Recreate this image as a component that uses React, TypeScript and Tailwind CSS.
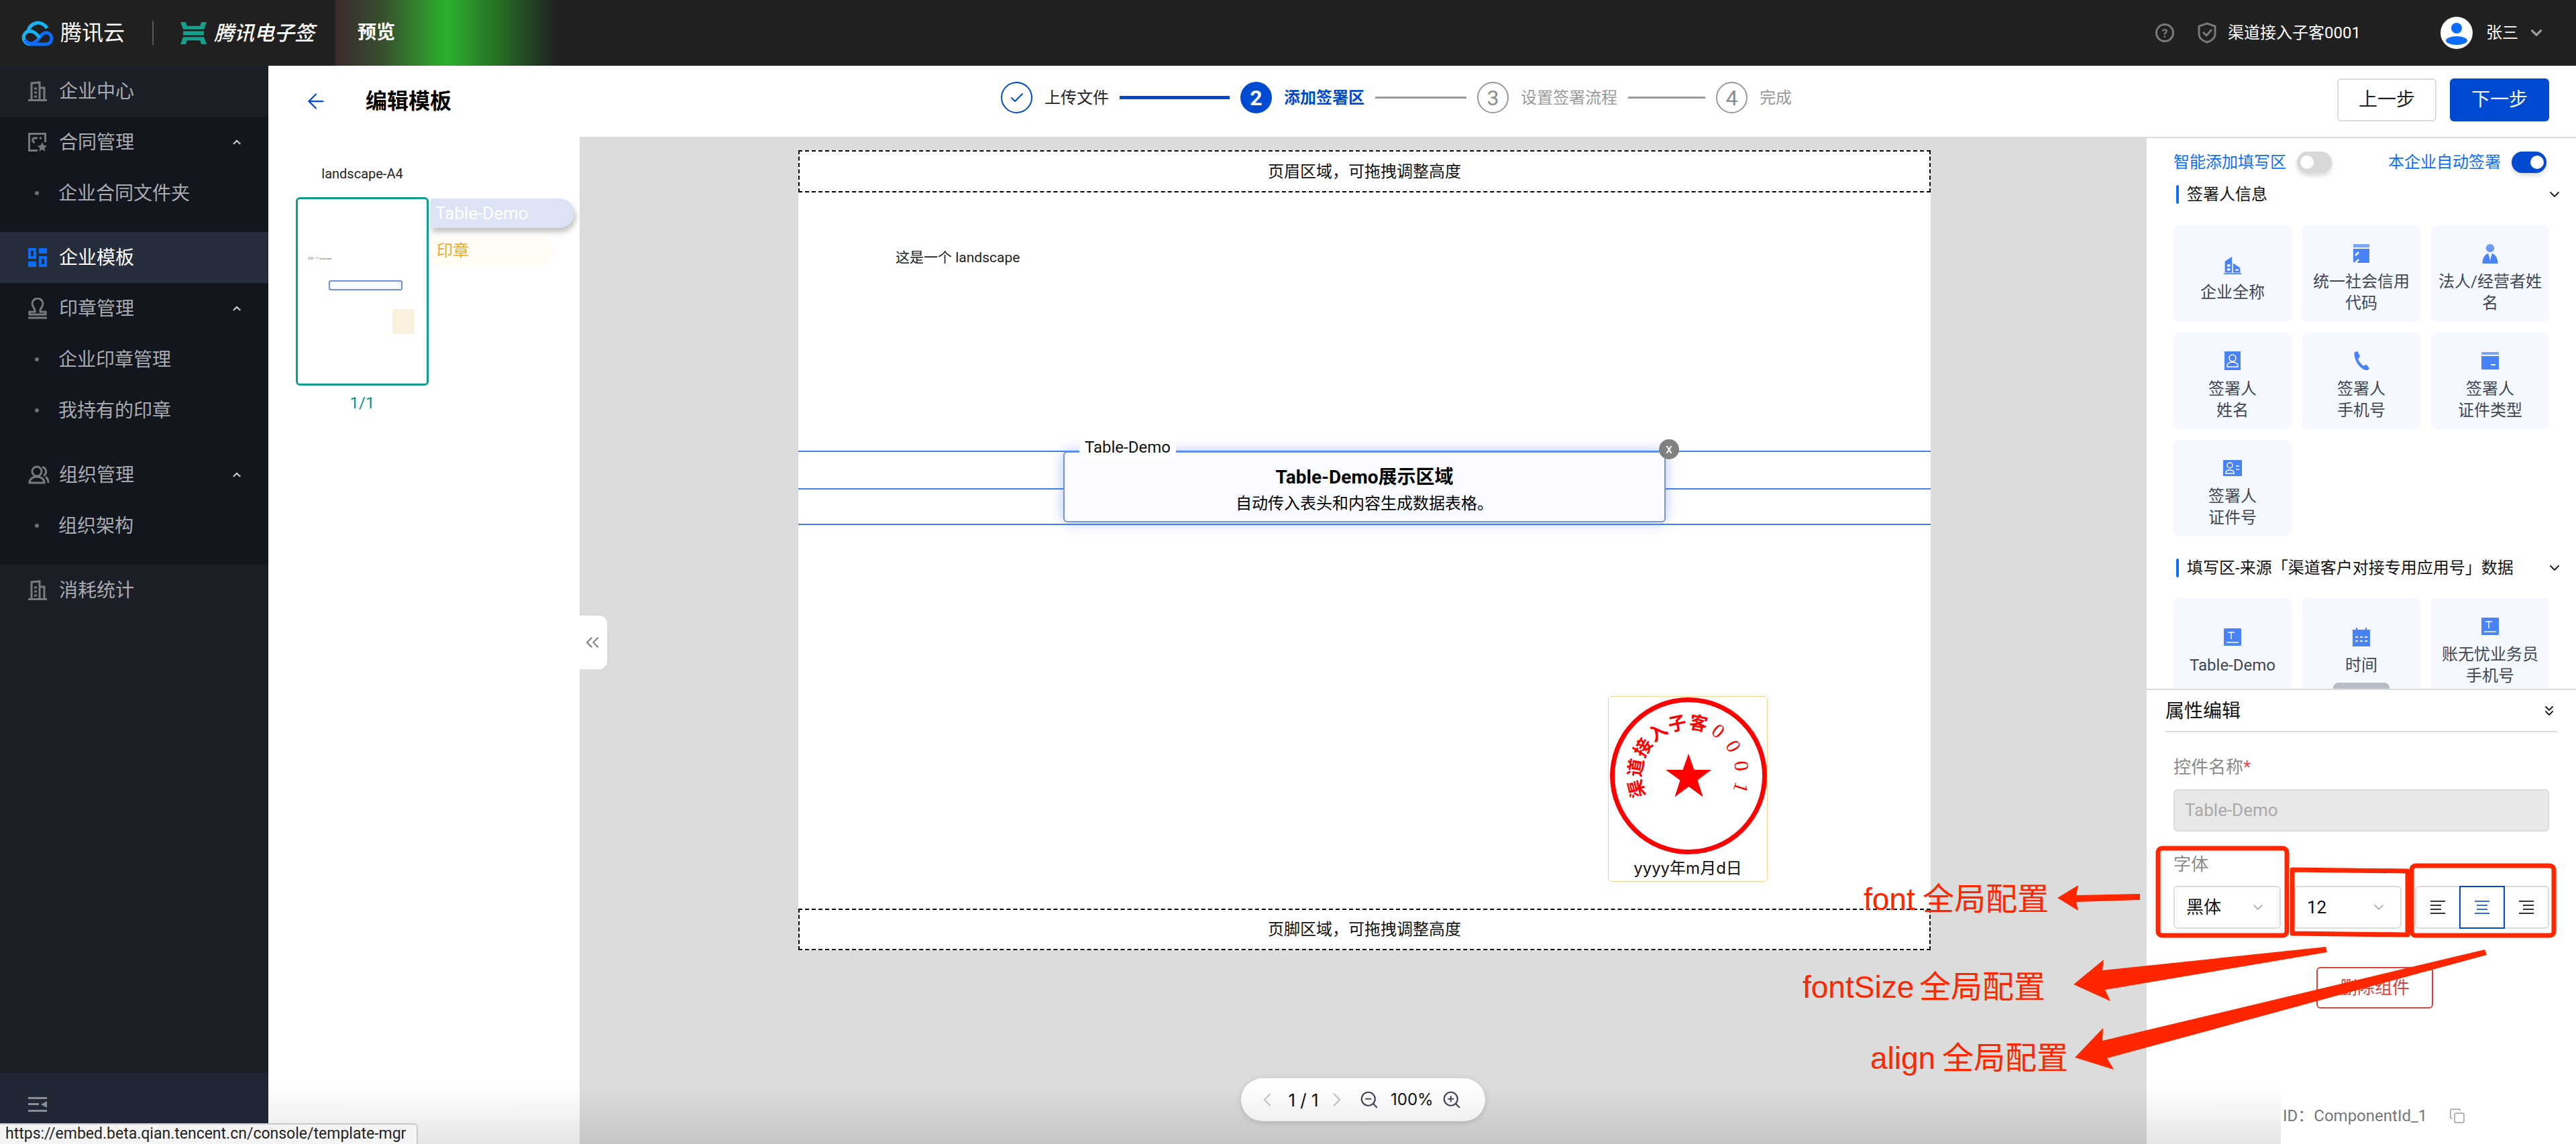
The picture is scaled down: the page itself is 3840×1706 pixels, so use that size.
import type { ReactNode } from "react"
import { ArrowLeft, ChevronDown, ChevronLeft, ChevronRight, ChevronUp, ChevronsDown, ChevronsLeft, Copy, Check, ZoomIn, ZoomOut } from "lucide-react"

const Building = ({ className = "" }: { className?: string }) => (
  <svg viewBox="0 0 28 30" className={className} fill="none" stroke="currentColor" strokeWidth="3">
    <path d="M5 28V3l12-1v26M17 10h7v18M0 28.5h28M9 11h4M9 17h4M9 23h4" />
  </svg>
)

const Contract = () => (
  <svg viewBox="0 0 28 28" className="w-7 h-7 text-[#767a80]" fill="none" stroke="currentColor" strokeWidth="3">
    <path d="M14 26.5H1.5v-25h24V14M7 8h7M7 8v6M7 14h3M17 8h3" />
    <path d="M21 14l2.2 4.8 5 .5-3.8 3.4 1.1 5-4.5-2.7-4.5 2.7 1.1-5-3.8-3.4 5-.5z" fill="currentColor" stroke="none" />
  </svg>
)

const Template = () => (
  <svg viewBox="0 0 28 28" className="w-7 h-7">
    <path fillRule="evenodd" d="M0 0h12v16H0zM4 4v8h4V4z" fill="#0d6dfb" />
    <path d="M16 0h12v8H16zM0 20h12v8H0z" fill="#0d6dfb" />
    <path fillRule="evenodd" d="M16 12h12v16H16zM20 16v8h4v-8z" fill="#0d6dfb" />
  </svg>
)

const Seal = () => (
  <svg viewBox="0 0 28 32" className="w-7 h-8 text-[#767a80]" fill="none" stroke="currentColor" strokeWidth="3">
    <path d="M10 19c0-4-4-5-4-10a8 8 0 0 1 16 0c0 5-4 6-4 10v2h8v4H2v-4h8z" />
    <path d="M0 30h28" />
  </svg>
)

const Team = () => (
  <svg viewBox="0 0 32 28" className="w-8 h-7 text-[#767a80]" fill="none" stroke="currentColor" strokeWidth="3">
    <circle cx="13" cy="9" r="7" />
    <path d="M2 26c0-5 4-9 11-9s11 4 11 9zM21 2.5a7 7 0 0 1 2 13M26 17c2.500 2 4 5 4 9" />
  </svg>
)

const SideRow = ({ icon, label, active, arrow }: { icon: ReactNode; label: string; active?: boolean; arrow?: boolean }) => (
  <div className={`h-[76px] flex items-center pl-[42px] pr-[38px] text-[28px] ${active ? "bg-[#262e3e] text-white" : "text-[#a8abaf]"}`}>
    <div className="w-[46px] flex items-center">{icon}</div>
    <span className="pt-[2px]">{label}</span>
    {arrow && <ChevronUp className="ml-auto w-[18px] h-[18px] text-[#c4c6c9]" strokeWidth={3} />}
  </div>
)

const SubRow = ({ label }: { label: string }) => (
  <div className="h-[76px] flex items-center text-[28px] text-[#a8abaf] pl-[52px]">
    <div className="w-[6px] h-[6px] rounded-full bg-[#6d7075] mr-[29px]" />
    <span className="pt-[2px]">{label}</span>
  </div>
)

const Sidebar = () => (
  <aside className="w-[400px] shrink-0 bg-[#1c1f28] flex flex-col">
    <SideRow icon={<Building className="w-7 h-[30px] text-[#767a80]" />} label="企业中心" />
    <div className="bg-[#13161f] pb-5">
      <SideRow icon={<Contract />} label="合同管理" arrow />
      <SubRow label="企业合同文件夹" />
    </div>
    <SideRow icon={<Template />} label="企业模板" active />
    <div className="bg-[#13161f] pb-5">
      <SideRow icon={<Seal />} label="印章管理" arrow />
      <SubRow label="企业印章管理" />
      <SubRow label="我持有的印章" />
      <div className="h-5" />
      <SideRow icon={<Team />} label="组织管理" arrow />
      <SubRow label="组织架构" />
    </div>
    <SideRow icon={<Building className="w-7 h-[30px] text-[#767a80]" />} label="消耗统计" />
    <div className="mt-auto h-[106px] bg-[#202836] pl-[42px] pt-[36px]">
      <svg viewBox="0 0 28 22" className="w-7 h-[22px] text-[#8a8d92]" fill="currentColor">
        <path d="M0 0h28v3H0zM0 9h16v3H0zM0 19h28v3H0zM28 6v10l-9-5z" />
      </svg>
    </div>
  </aside>
)

const TopBar = () => (
  <header className="h-[98px] bg-[#202020] relative flex items-center text-white shrink-0">
    <div className="absolute left-[500px] top-0 w-[330px] h-full bg-[linear-gradient(90deg,#3a2a2c_0%,#38502e_22%,#2cb02c_50%,#256b25_75%,#202020_100%)]" />
    <svg viewBox="0 0 50 40" className="ml-[32px] w-[50px] h-10 relative" fill="none" strokeWidth="5">
      <path d="M13 37a10 10 0 0 1-3-19.500A15 15 0 0 1 38 13" stroke="#16b4f2" />
      <path d="M5 30c6 10 15 6 21-2s10-10 15-7c6 4 5 16-5 16H13" stroke="#0d6dfb" />
      <path d="M10 18c7-2 12 3 17 9" stroke="#16b4f2" />
    </svg>
    <span className="ml-[8px] text-[32px] relative">腾讯云</span>
    <div className="ml-[41px] w-[2px] h-9 bg-[#55575a] relative" />
    <svg viewBox="0 0 40 34" className="ml-[40px] w-[39px] h-[33px] relative" fill="#13a08f">
      <path d="M0 0h8l2 6h20l2-6h8l-4 11H4zM4 14h32v6H4zM4 23h32l4 11h-8l-2-6H10l-2 6H0z" />
    </svg>
    <span className="ml-[11px] text-[30px] italic font-medium relative">腾讯电子签</span>
    <span className="ml-[64px] text-[28px] font-bold relative">预览</span>
    <div className="ml-auto flex items-center relative">
      <div className="w-7 h-7 rounded-full border-[3px] border-[#77797c] text-[#77797c] text-[18px] font-bold flex items-center justify-center">?</div>
      <svg viewBox="0 0 28 32" className="ml-[35px] w-7 h-8 text-[#77797c]" fill="none" stroke="currentColor" strokeWidth="3">
        <path d="M14 2l12 4v12c0 6-6 10-12 12C8 28 2 24 2 18V6z" />
        <path d="M8 15l5 5 8-9" />
      </svg>
      <span className="ml-[17px] text-[24px] w-[194px] whitespace-nowrap">渠道接入子客0001</span>
      <div className="ml-[123px] w-12 h-12 rounded-full bg-white relative overflow-hidden">
        <div className="absolute left-[16px] top-[9px] w-4 h-4 rounded-full bg-[#0d6dfb]" />
        <div className="absolute left-[8px] top-[29px] w-8 h-[13px] rounded-[50%] bg-[#0d6dfb]" />
      </div>
      <span className="ml-[20px] text-[24px]">张三</span>
      <ChevronDown className="ml-[14px] mr-[46px] w-[26px] h-[26px] text-[#9a9a9a]" strokeWidth={3} />
    </div>
  </header>
)

const Step = ({ n, label, state, line }: { n: string; label: string; state: "done" | "active" | "todo"; line?: number }) => (
  <div className="flex items-center">
    {state === "done" && (
      <div className="w-[47px] h-[47px] rounded-full border-2 border-[#0049d1] flex items-center justify-center text-[#0049d1]">
        <Check className="w-6 h-6" strokeWidth={2} />
      </div>
    )}
    {state === "active" && <div className="w-[47px] h-[47px] rounded-full bg-[#0049d1] flex items-center justify-center text-white text-[32px] font-bold">{n}</div>}
    {state === "todo" && <div className="w-[47px] h-[47px] rounded-full border-2 border-[#999] flex items-center justify-center text-[#8b8b8b] text-[32px]">{n}</div>}
    <span className={`ml-[18px] text-[24px] ${state === "done" ? "text-[#222]" : state === "active" ? "text-[#0049d1] font-bold" : "text-[#999]"}`}>{label}</span>
    {line && (
      <div
        className={`mx-[16px] ${state === "done" ? "h-[5px] bg-[#0049d1]" : "h-[3px] bg-[#999]"}`}
        style={{ width: line }}
      />
    )}
  </div>
)

const HeaderRow = () => (
  <div className="h-[106px] shrink-0 bg-white flex items-center relative">
    <ArrowLeft className="ml-[53px] w-9 h-9 text-[#0049d1]" strokeWidth={1.5} />
    <span className="ml-[56px] text-[32px] font-bold text-black">编辑模板</span>
    <div className="absolute left-[1092px] top-[24px] flex items-center">
      <Step n="1" label="上传文件" state="done" line={164} />
      <Step n="2" label="添加签署区" state="active" line={136} />
      <Step n="3" label="设置签署流程" state="todo" line={115} />
      <Step n="4" label="完成" state="todo" />
    </div>
    <div className="ml-auto flex gap-5 pr-10 -mt-1">
      <button className="w-[148px] h-16 rounded-md border-2 border-[#dcdcdc] bg-white text-[28px] text-[#222]">上一步</button>
      <button className="w-[148px] h-16 rounded-md bg-[#0049d1] text-[28px] text-white">下一步</button>
    </div>
  </div>
)

const ThumbPanel = () => (
  <div className="w-[464px] shrink-0 bg-white relative">
    <div className="absolute left-[41px] top-[40px] w-[198px] text-center text-[20px] text-[#222]">landscape-A4</div>
    <div className="absolute left-[41px] top-[90px] w-[198px] h-[281px] border-[3px] border-[#0f9d8f] rounded-md bg-white">
      <div className="absolute left-[15px] top-[86px] text-[4px] text-[#666]">这是一个 landscape</div>
      <div className="absolute left-[46px] top-[121px] w-[110px] h-[15px] border-2 border-[#6d8ee0] rounded-[3px] bg-[#f8fbff]" />
      <div className="absolute left-[141px] top-[164px] w-[33px] h-[37px] rounded-[2px] bg-[#faf0dd]" />
    </div>
    <div className="absolute left-[41px] top-[379px] w-[198px] text-center text-[24px] text-[#0f8f86]">1/1</div>
    <div className="absolute left-[242px] top-[92px] w-[214px] h-[44px] rounded-r-[22px] bg-[#dbe3f5] shadow-[2px_6px_8px_rgba(0,0,0,0.25)] pl-[7px] text-[26px] leading-[44px] text-white">Table-Demo</div>
    <div className="absolute left-[242px] top-[148px] w-[183px] h-[44px] rounded-r-[22px] bg-[#fffcf3] pl-[9px] text-[24px] leading-[44px] text-[#eda72c]">印章</div>
  </div>
)

const Stamp = () => (
  <div className="absolute left-[1207px] top-[751px] w-[238px] h-[277px] border border-[#f2d48c] rounded-md bg-white">
    <svg viewBox="0 0 238 236" className="w-[238px] h-[236px]">
      <defs>
        <path id="stampArc" d="M55.600 147.600 A70 70 0 1 1 182.400 147.600" />
      </defs>
      <circle cx="119" cy="118" r="113.500" fill="none" stroke="#ff0000" strokeWidth="7" />
      <text fontWeight="700" fill="#ff0000" fontFamily="'Liberation Serif','Noto Sans CJK SC',serif">
        <textPath href="#stampArc">
          <tspan fontSize="27" letterSpacing="1">渠道接入子客</tspan>
          <tspan fontSize="30" fontWeight="400" letterSpacing="13" dx="5">0001</tspan>
        </textPath>
      </text>
      <path d="M119 85l8.500 24h25.500l-20.500 15.500 8 25-21-15.500-21 15.500 8-25L85 109h25.500z" fill="#ff0000" />
    </svg>
    <div className="text-center text-[24px] leading-[34px] text-[#111] mt-[3px] font-['Inter','Noto_Sans_CJK_SC',sans-serif]">yyyy年m月d日</div>
  </div>
)

const TableField = () => (
  <>
    <div className="absolute left-0 right-0 top-[385px] h-[2px] bg-[#3d82ee]" />
    <div className="absolute left-0 right-0 top-[441px] h-[2px] bg-[#3d82ee]" />
    <div className="absolute left-0 right-0 top-[494px] h-[2px] bg-[#3d82ee]" />
    <div className="absolute left-[395px] top-[386px] w-[898px] h-[106px] rounded-md border-2 border-[#7593dd] bg-[#fafbff] shadow-[0_0_20px_rgba(70,110,220,0.4)] flex flex-col items-center text-black">
      <div className="absolute left-[22px] -top-[26px] px-[8px] bg-white text-[24px] leading-[36px] text-[#111]">Table-Demo</div>
      <div className="absolute -right-[22px] -top-[20px] w-[30px] h-[30px] rounded-full bg-[#808080] text-white text-[20px] leading-[28px] text-center">x</div>
      <div className="mt-[19px] text-[28px] leading-[36px] font-bold">Table-Demo展示区域</div>
      <div className="mt-[4px] text-[24px] leading-[34px]">自动传入表头和内容生成数据表格。</div>
    </div>
  </>
)

const Canvas = () => (
  <div className="flex-1 bg-[#dcdcdc] relative">
    <div className="ml-[326px] mt-[20px] w-[1688px] h-[1193px] bg-white flex flex-col">
      <div className="h-[63px] shrink-0 border-2 border-dashed border-black flex items-center justify-center text-[24px] text-[#111]">页眉区域，可拖拽调整高度</div>
      <div className="flex-1 relative">
        <div className="absolute left-[145px] top-[80px] text-[21px] leading-[34px] text-[#222]">这是一个 landscape</div>
        <TableField />
        <Stamp />
      </div>
      <div className="h-[62px] shrink-0 border-2 border-dashed border-black flex items-center justify-center text-[24px] text-[#111]">页脚区域，可拖拽调整高度</div>
    </div>
    <div className="absolute -left-[4px] top-[714px] w-[45px] h-[80px] rounded-r-xl bg-white flex items-center justify-center text-[#8a8a8a]">
      <ChevronsLeft className="w-8 h-8" strokeWidth={1.75} />
    </div>
    <div className="absolute left-[986px] top-[1404px] w-[364px] h-16 rounded-[32px] bg-white shadow-[0_2px_10px_rgba(0,0,0,0.15)] flex items-center text-[26px] text-[#111] whitespace-nowrap font-['Inter','Noto_Sans_CJK_SC',sans-serif]">
      <ChevronLeft className="ml-[22px] w-[34px] h-[34px] text-[#c4c4c4]" strokeWidth={1.5} />
      <span className="ml-[10px] w-[54px] text-center">1 / 1</span>
      <ChevronRight className="ml-[6px] w-[34px] h-[34px] text-[#c4c4c4]" strokeWidth={1.5} />
      <ZoomOut className="ml-[16px] w-[30px] h-[30px] text-[#454a5a]" strokeWidth={1.75} />
      <span className="ml-[17px] text-[24px]">100%</span>
      <ZoomIn className="ml-[12px] w-[30px] h-[30px] text-[#454a5a]" strokeWidth={1.75} />
    </div>
  </div>
)

const iconBlue = "#4a82f7"

const CardIcon = ({ kind }: { kind: string }) => {
  if (kind === "company")
    return (
      <svg viewBox="0 0 30 32" className="w-[30px] h-7 mt-[2px]" fill={iconBlue}>
        <path fillRule="evenodd" d="M2 10l12-8v27H2zM6 15v4h5v-4zM6 22v4h5v-4z" />
        <path fillRule="evenodd" d="M16 13l12 8v8H16zM20 23v3h5v-3z" />
        <path d="M0 30h30v2H0z" />
      </svg>
    )
  if (kind === "credit")
    return (
      <svg viewBox="0 0 24 28" className="w-6 h-7" fill={iconBlue}>
        <path d="M0 0h24v5H0z" opacity="0.7" />
        <path fillRule="evenodd" d="M0 7h24v21H5l4-4-2-2-5 5H0zM2 16l2 2 5-5-2-2z" />
      </svg>
    )
  if (kind === "legal")
    return (
      <svg viewBox="0 0 26 34" className="w-6 h-[30px]" fill={iconBlue}>
        <circle cx="13" cy="8" r="7" opacity="0.8" />
        <path d="M0 34c0-10 5-16 10-17l3 12 3-12c5 1 10 7 10 17z" />
      </svg>
    )
  if (kind === "name")
    return (
      <svg viewBox="0 0 24 28" className="w-6 h-7">
        <rect width="24" height="28" fill={iconBlue} />
        <circle cx="12" cy="10" r="5" fill="none" stroke="#fff" strokeWidth="1.500" />
        <path d="M4 23v-2c0-3 4-5 8-5s8 2 8 5v2z" fill="none" stroke="#fff" strokeWidth="1.500" />
      </svg>
    )
  if (kind === "phone")
    return (
      <svg viewBox="0 0 26 30" className="w-[26px] h-7" fill={iconBlue}>
        <path d="M2 1l5-1 4 8-3 4c1 4 5 9 9 11l4-2 5 6-3 3C14 32 0 15 2 1z" />
      </svg>
    )
  if (kind === "idtype")
    return (
      <svg viewBox="0 0 26 26" className="w-[26px] h-[26px]" fill={iconBlue}>
        <path d="M1 0h24a1 1 0 0 1 1 1v3H0V1a1 1 0 0 1 1-1z" opacity="0.7" />
        <path fillRule="evenodd" d="M0 6h26v19a1 1 0 0 1-1 1H1a1 1 0 0 1-1-1zM14 18v2h7v-2z" />
      </svg>
    )
  if (kind === "idnum")
    return (
      <svg viewBox="0 0 28 24" className="w-7 h-6">
        <rect width="28" height="24" rx="1" fill={iconBlue} />
        <circle cx="10" cy="8" r="4" fill="none" stroke="#fff" strokeWidth="1.500" />
        <path d="M4 20v-1c0-3 3-4 6-4s6 1 6 4v1zM19 9h5M19 14h5" fill="none" stroke="#fff" strokeWidth="1.500" />
      </svg>
    )
  if (kind === "date")
    return (
      <svg viewBox="0 0 26 28" className="w-[26px] h-7" fill={iconBlue}>
        <path fillRule="evenodd" d="M0 3h5V0h2v3h12V0h2v3h5v25H0zM4 13v2h4v-2zM11 13v2h4v-2zM18 13v2h4v-2zM4 19v2h4v-2zM11 19v2h4v-2zM18 19v2h4v-2z" />
      </svg>
    )
  return (
    <svg viewBox="0 0 26 26" className="w-[26px] h-[26px]">
      <rect width="26" height="26" rx="1.500" fill={iconBlue} />
      <path d="M6 6h10M11 6v10M4 21h18" stroke="#fff" strokeWidth="1.500" fill="none" />
    </svg>
  )
}

const Card = ({ kind, lines }: { kind: string; lines: string[] }) => (
  <div className="w-[176px] h-[144px] rounded-lg bg-[#f5f8ff] flex flex-col items-center justify-center pt-4 text-[24px] leading-8 text-[#3f4754] text-center">
    <div className="h-7 flex items-center justify-center">
      <CardIcon kind={kind} />
    </div>
    <div className="mt-3">
      {lines.map((l) => (
        <div key={l}>{l}</div>
      ))}
    </div>
  </div>
)

const Toggle = ({ on }: { on?: boolean }) => (
  <div className={`relative w-[52px] h-8 rounded-full shadow-[0_4px_6px_rgba(0,0,0,0.15)] ${on ? "bg-[#0049d1]" : "bg-[#d8d8d8]"}`}>
    <div className={`absolute top-[6px] w-5 h-5 rounded-full bg-white ${on ? "right-[4px]" : "left-[5px]"}`} />
  </div>
)

const SectionTitle = ({ text }: { text: string }) => (
  <div className="h-7 flex items-center text-[24px] text-[#111] pl-[44px] pr-[20px]">
    <div className="w-1 h-7 rounded-sm bg-[#0d6dfb]" />
    <span className="ml-3">{text}</span>
    <ChevronDown className="ml-auto w-6 h-6 text-[#222]" strokeWidth={2} />
  </div>
)

const FieldPanel = () => (
  <div className="flex-1 overflow-hidden relative pt-5">
    <div className="flex items-center pl-[40px] text-[24px] text-[#0d6dfb] h-8 whitespace-nowrap">
      <span className="w-[168px]">智能添加填写区</span>
      <div className="ml-[16px]"><Toggle /></div>
      <span className="ml-[84px] w-[168px]">本企业自动签署</span>
      <div className="ml-[16px]"><Toggle on /></div>
    </div>
    <div className="mt-[18px]"><SectionTitle text="签署人信息" /></div>
    <div className="mt-8 ml-10 grid grid-cols-[176px_176px_176px] gap-4">
      <Card kind="company" lines={["企业全称"]} />
      <Card kind="credit" lines={["统一社会信用", "代码"]} />
      <Card kind="legal" lines={["法人/经营者姓", "名"]} />
      <Card kind="name" lines={["签署人", "姓名"]} />
      <Card kind="phone" lines={["签署人", "手机号"]} />
      <Card kind="idtype" lines={["签署人", "证件类型"]} />
      <Card kind="idnum" lines={["签署人", "证件号"]} />
    </div>
    <div className="mt-[33px]"><SectionTitle text="填写区-来源「渠道客户对接专用应用号」数据" /></div>
    <div className="mt-[31px] ml-10 grid grid-cols-[176px_176px_176px] gap-4">
      <Card kind="text" lines={["Table-Demo"]} />
      <Card kind="date" lines={["时间"]} />
      <Card kind="text" lines={["账无忧业务员", "手机号"]} />
    </div>
    <div className="absolute left-[278px] bottom-0 w-[84px] h-[9px] rounded-t-lg bg-[#b9bdc7]" />
  </div>
)

const AlignIcon = ({ side, color }: { side: "left" | "center" | "right"; color: string }) => {
  const x = side === "left" ? 0 : side === "center" ? 3 : 6
  return (
    <svg viewBox="0 0 22 22" className="w-[22px] h-[22px]" stroke={color} strokeWidth="2">
      <path d="M0 2h22M0 20h22" />
      <path d={`M${x} 8h16M${x} 14h16`} />
    </svg>
  )
}

const SelectBox = ({ value, width }: { value: string; width: string }) => (
  <div className={`${width} h-16 rounded-md border-2 border-[#dcdcdc] flex items-center pl-[17px] pr-[20px] text-[26px] text-[#111]`}>
    <span>{value}</span>
    <ChevronDown className="ml-auto w-6 h-6 text-[#999]" strokeWidth={1.5} />
  </div>
)

const PropsPanel = () => (
  <div className="h-[679px] shrink-0 border-t-2 border-[#dcdcdc] bg-white">
    <div className="mx-7 h-[63px] border-b-2 border-[#dcdcdc] flex items-center justify-between text-[28px] text-[#111]">
      <span className="pt-[2px]">属性编辑</span>
      <ChevronsDown className="w-6 h-6 text-[#222]" strokeWidth={2} />
    </div>
    <div className="px-10">
      <div className="mt-[36px] h-8 text-[26px] leading-8 text-[#8a8a8a]">
        控件名称<span className="text-[#e5484d]">*</span>
      </div>
      <div className="mt-[17px] h-[63px] rounded-md border-2 border-[#dcdcdc] bg-[#e8e8e8] flex items-center pl-[15px] text-[26px] text-[#a8a8a8]">Table-Demo</div>
      <div className="mt-[33px] h-8 text-[26px] leading-8 text-[#8a8a8a]">字体</div>
      <div className="mt-4 flex gap-5">
        <SelectBox value="黑体" width="w-[160px]" />
        <SelectBox value="12" width="w-[160px]" />
        <div className="w-[200px] h-16 rounded-md border-2 border-[#dcdcdc] flex items-center relative">
          <div className="w-[65px] flex justify-center"><AlignIcon side="left" color="#333" /></div>
          <div className="w-[68px] h-16 flex justify-center items-center border-2 border-[#0049d1]"><AlignIcon side="center" color="#2f6fe8" /></div>
          <div className="w-[65px] flex justify-center"><AlignIcon side="right" color="#333" /></div>
        </div>
      </div>
      <div className="mt-[57px] flex justify-center translate-x-[20px]">
        <button className="w-[174px] h-[62px] rounded-md border-2 border-[#d9433f] text-[26px] text-[#d9433f] bg-white">删除组件</button>
      </div>
      <div className="mt-[144px] h-8 flex items-center text-[24px] text-[#777] pl-[163px]">
        <span>ID：ComponentId_1</span>
        <Copy className="ml-[33px] w-6 h-6 text-[#aaa]" strokeWidth={1.75} />
      </div>
    </div>
  </div>
)

const Annotations = () => (
  <svg viewBox="0 0 3840 1706" className="absolute left-0 top-0 w-[3840px] h-[1706px] pointer-events-none">
    <g fill="none" stroke="#ff2600" strokeWidth="7" strokeLinejoin="round">
      <rect x="3217" y="1265" width="192" height="130" rx="6" />
      <path d="M3417 1297l172 2v95l-172-2z" />
      <rect x="3595" y="1291" width="212" height="104" rx="6" />
    </g>
    <g fill="#ff2600">
      <path d="M3067 1339l31-19-3 15 95-2v9l-95 3 3 13z" />
      <path d="M3091 1468l45-37-2 16 333-35 2 8-331 56 8 17z" />
      <path d="M3093 1577l42-44-1 19 570-136 3 8-566 154 10 17z" />
    </g>
    <g fontSize="46" fill="#ff2600" fontFamily="'Liberation Sans','Noto Sans CJK SC',sans-serif">
      <text x="2778" y="1357">font</text>
      <text x="2866" y="1357" fontSize="47">全局配置</text>
      <text x="2687" y="1488">fontSize</text>
      <text x="2861" y="1488" fontSize="47">全局配置</text>
      <text x="2788" y="1594">align</text>
      <text x="2895" y="1594" fontSize="47">全局配置</text>
    </g>
  </svg>
)

export default function App() {
  return (
    <div className="w-[3840px] h-[1706px] relative overflow-hidden flex flex-col bg-white font-['Roboto','Noto_Sans_CJK_SC',sans-serif]">
      <TopBar />
      <div className="flex-1 flex min-h-0">
        <Sidebar />
        <main className="flex-1 flex flex-col min-w-0">
          <HeaderRow />
          <div className="flex-1 flex min-h-0">
            <ThumbPanel />
            <Canvas />
            <div className="w-[640px] shrink-0 bg-white flex flex-col border-t-2 border-[#dcdcdc]">
              <FieldPanel />
              <PropsPanel />
            </div>
          </div>
        </main>
      </div>
      <div className="absolute left-[400px] bottom-0 w-[3000px] h-[86px] bg-gradient-to-t from-black/10 to-transparent pointer-events-none" />
      <Annotations />
      <div className="absolute left-0 bottom-0 w-[623px] h-[31px] bg-[#f4f4f4] border-t-2 border-r-2 border-[#c9c9c9] rounded-tr-md pl-2 text-[23px] leading-[28px] text-[#222] overflow-hidden whitespace-nowrap">
        https://embed.beta.qian.tencent.cn/console/template-mgr
      </div>
    </div>
  )
}
